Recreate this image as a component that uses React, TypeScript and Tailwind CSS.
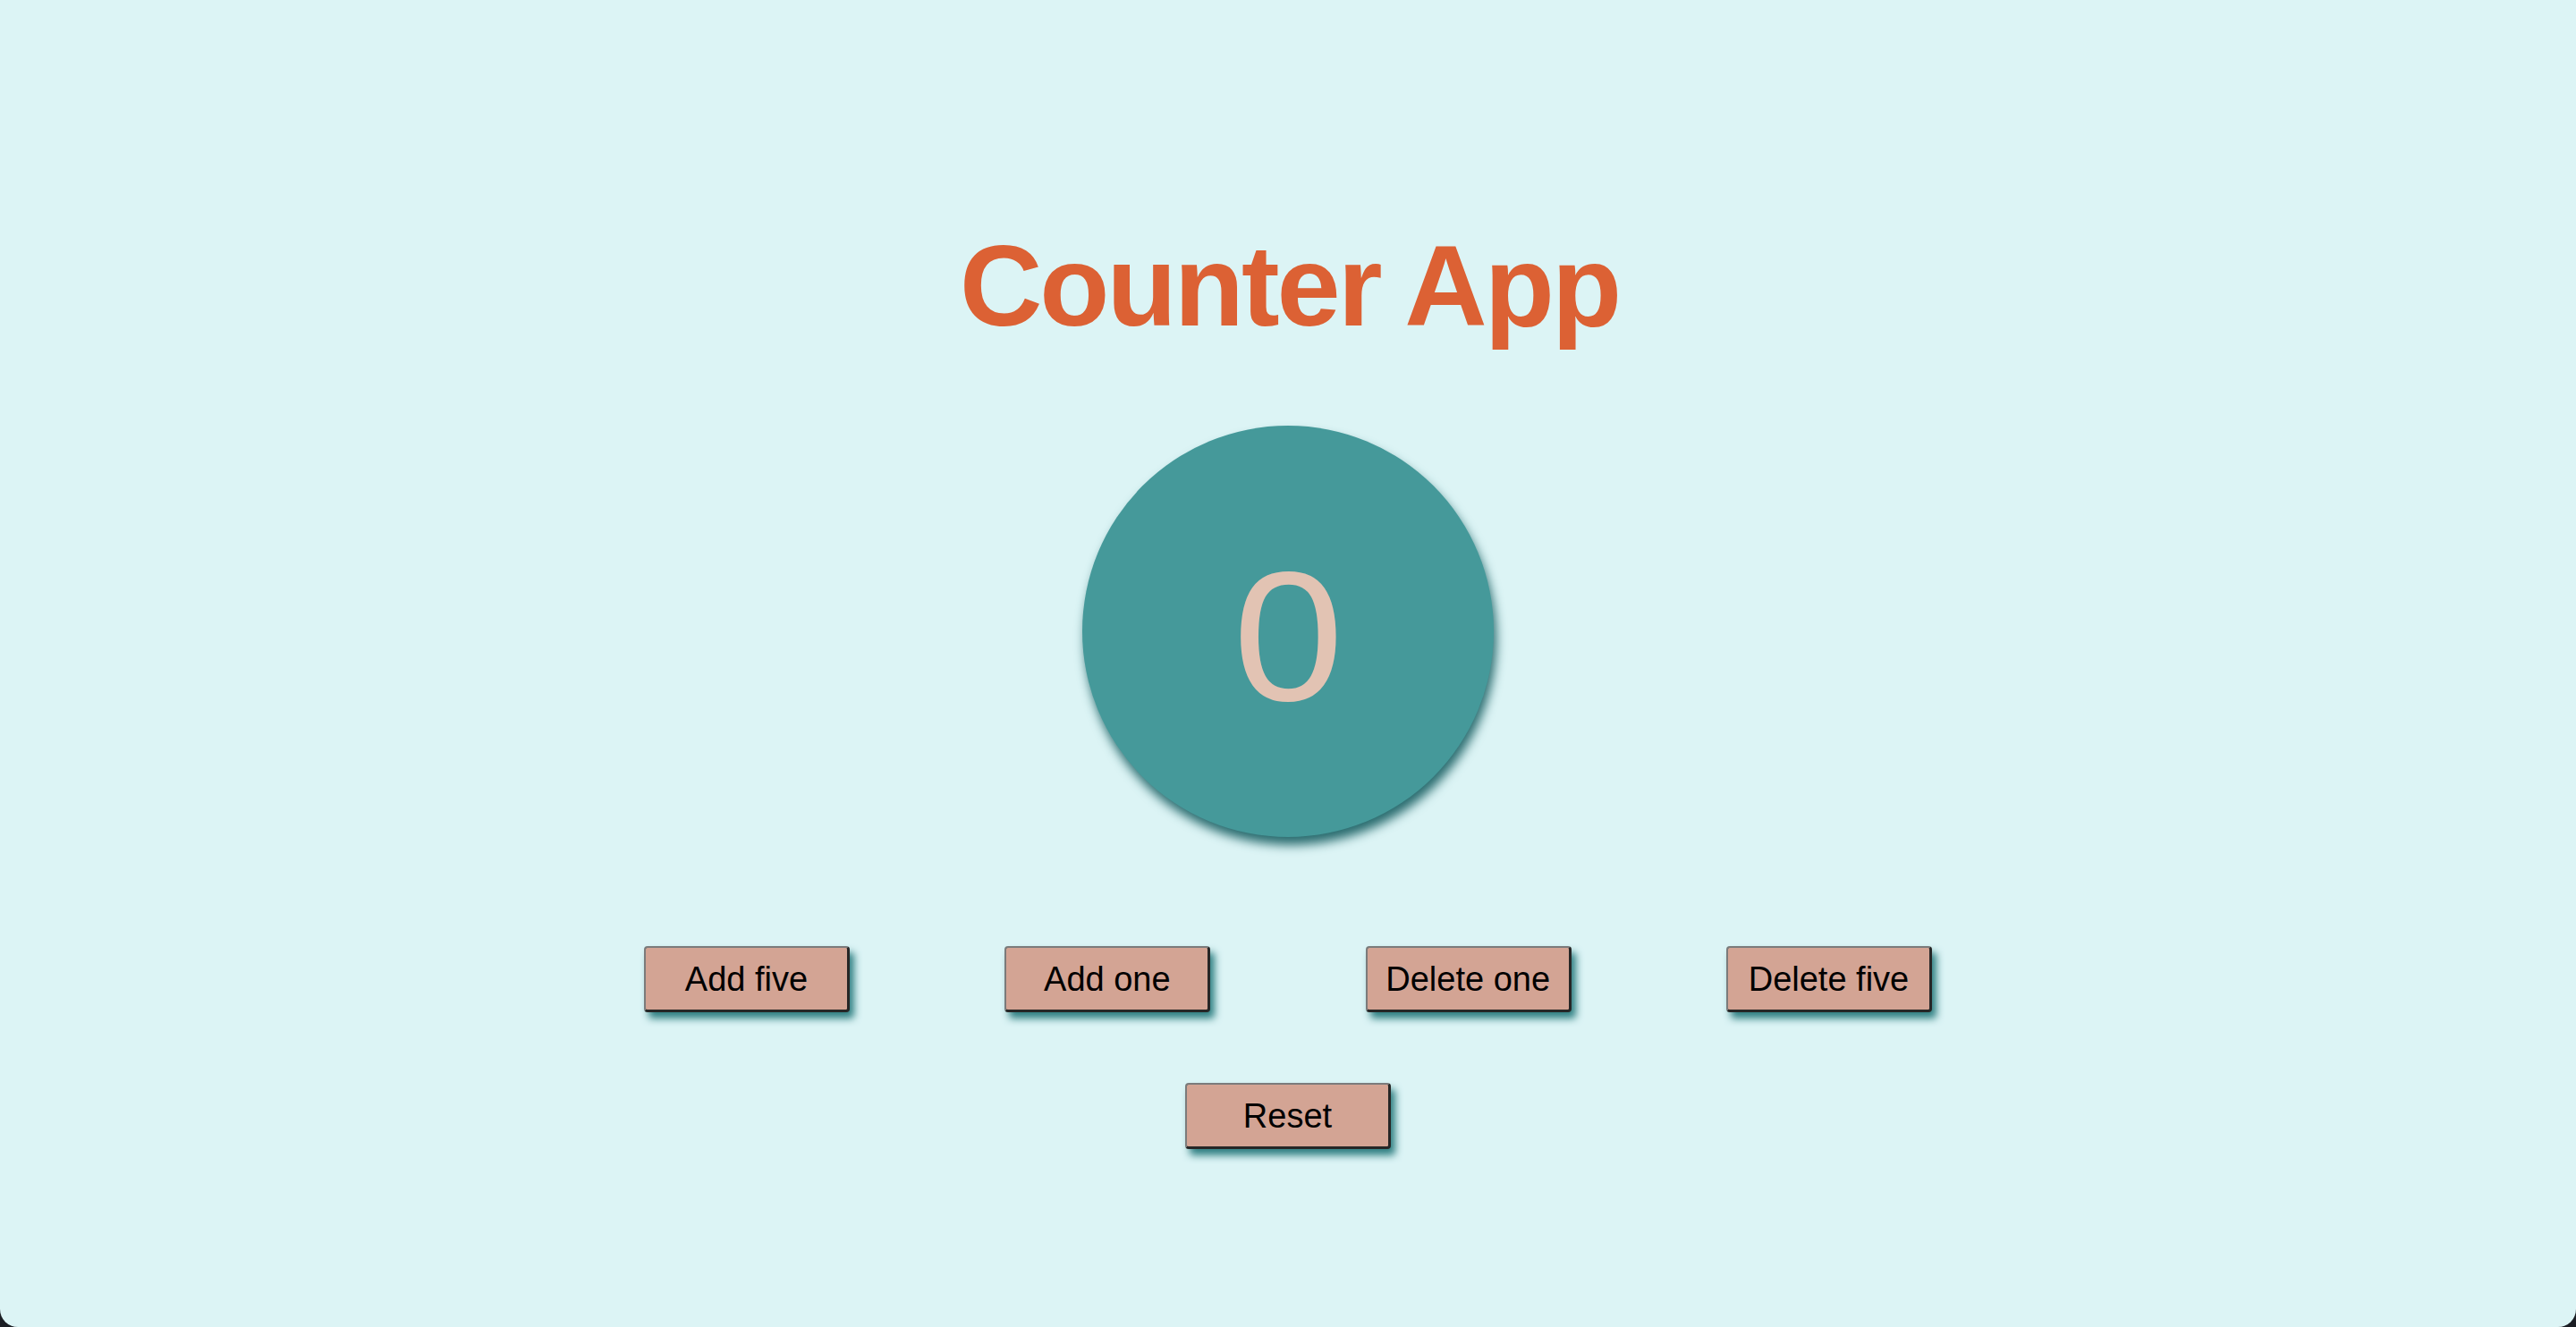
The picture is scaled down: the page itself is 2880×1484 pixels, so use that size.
import React, { useState } from "react";

export default function App() {
  const [count, setCount] = useState(0);
  const btn =
    "w-[230px] h-[74px] bg-[#d3a494] text-black text-[38px] leading-none rounded-[4px] border-t-2 border-l-2 border-b-[3px] border-r-[3px] border-t-[#7b7b7b] border-l-[#7b7b7b] border-b-[#262626] border-r-[#262626] shadow-[5px_7px_9px_#2f7f82] flex items-center justify-center font-['Liberation_Sans',Arial,sans-serif]";
  return (
    <div className="w-full h-screen bg-[#1b1e24]">
      <div className="w-full h-full bg-[#dcf4f5] rounded-b-[20px] flex flex-col items-center pt-[256px] font-['Liberation_Sans',Arial,sans-serif]">
        <h1 className="text-[128px] leading-none font-bold text-[#dc6134] tracking-[-3px] h-[128px] pl-[3px]">
          Counter App
        </h1>
        <div className="mt-[92px] w-[460px] h-[460px] rounded-full bg-[#45999a] shadow-[3px_9px_12px_#2b6d70] flex items-center justify-center">
          <span className="text-[206px] leading-none text-[#e2c3b3] mt-[12px] inline-block scale-x-[1.08]">{count}</span>
        </div>
        <div className="mt-[122px] w-[1440px] flex justify-between">
          <button className={btn} onClick={() => setCount(count + 5)}>Add five</button>
          <button className={btn} onClick={() => setCount(count + 1)}>Add one</button>
          <button className={btn} onClick={() => setCount(count - 1)}>Delete one</button>
          <button className={btn} onClick={() => setCount(count - 5)}>Delete five</button>
        </div>
        <div className="mt-[79px]">
          <button className={btn} onClick={() => setCount(0)}>Reset</button>
        </div>
      </div>
    </div>
  );
}
